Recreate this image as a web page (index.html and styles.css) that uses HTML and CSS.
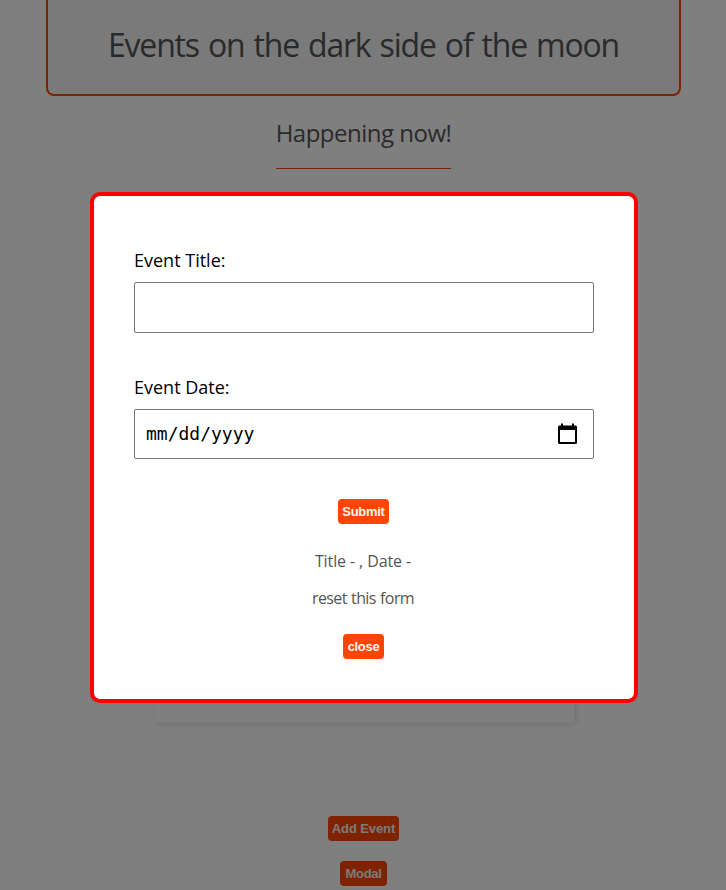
FILE: index.html
```
<!DOCTYPE html>
<html lang="en">
<head>
<meta charset="utf-8">
<title>Events on the dark side of the moon</title>
<link rel="stylesheet" href="styles.css">
</head>
<body>
<div class="page">
  <header class="banner"><h1 class="title"><span>Events on the dark side of the moon</span></h1></header>
  <h2 class="subtitle"><span>Happening now!</span></h2>
  <div class="card"></div>
  <button class="btn btn-add">Add Event</button>
  <button class="btn btn-open">Modal</button>
</div>
<div class="backdrop">
  <div class="modal">
    <form class="form">
      <label class="field"><span class="label label-title">Event Title:</span><span class="input"></span></label>
      <label class="field"><span class="label label-date">Event Date:</span>
        <span class="input"><span class="date">mm/dd/yyyy</span>
          <svg class="calendar" width="19" height="22" viewBox="0 0 19 22"><path d="M3 .5h2v2h9v-2h2v2h1.500a1.500 1.500 0 0 1 1.500 1.500v15.500a1.500 1.500 0 0 1-1.500 1.500h-16a1.500 1.500 0 0 1-1.500-1.500V4a1.500 1.500 0 0 1 1.500-1.500H3zM2 7v12h15V7z" fill="#000" fill-rule="evenodd"/></svg>
        </span>
      </label>
      <button type="button" class="btn btn-submit">Submit</button>
      <p class="note note-values"><span>Title - , Date -</span></p>
      <p class="note note-reset"><span>reset this form</span></p>
    </form>
    <button class="btn btn-close">close</button>
  </div>
</div>
</body>
</html>
```
FILE: styles.css
```
* { box-sizing: border-box; }
html, body { margin: 0; height: 100%; overflow: hidden; }
body {
  font-family: "Open Sans", "Noto Sans", sans-serif;
  font-size: 16px;
  color: #555;
  background: #fff;
}
h1, h2, p { margin: 0; font-weight: 400; white-space: nowrap; }
.page { display: flex; flex-direction: column; align-items: center; height: 890px; padding-left: 1px; }
.banner {
  width: 635px;
  height: 96px;
  padding-top: 22px;
  border: 2px solid #ff4500;
  border-top: 0;
  border-radius: 0 0 8px 8px;
  background: #f4f4f4;
  text-align: center;
}
.title { font-size: 32px; line-height: 46px; letter-spacing: -1.2px; word-spacing: 2px; }
.subtitle {
  height: 73px;
  padding-top: 19px;
  border-bottom: 1px solid #ff4500;
  font-size: 24px;
  line-height: 35px;
  letter-spacing: -0.5px;
}
.card {
  width: 422px;
  height: 523px;
  margin: 31px 0 93px;
  border: 1px solid #f4f4f4;
  border-radius: 4px;
  box-shadow: 3px 3px 5px rgba(0, 0, 0, 0.08);
}
.btn {
  display: flex;
  align-items: center;
  justify-content: center;
  height: 25px;
  padding: 0;
  border: 0;
  border-radius: 4px;
  background: #ff4500;
  color: #f4f4f4;
  font: bold 13px/15px "Liberation Sans", Arial, sans-serif;
  letter-spacing: -0.3px;
}
.btn-add { width: 71px; margin-bottom: 20px; letter-spacing: -0.1px; }
.btn-open { width: 47px; }
.backdrop { position: fixed; inset: 0; background: rgba(0, 0, 0, 0.5); }
.modal {
  width: 548px;
  height: 511px;
  margin: 192px 0 0 90px;
  padding: 49px 40px 0;
  border: 4px solid #f00;
  border-radius: 10px;
  background: #fff;
}
.form, .modal { display: flex; flex-direction: column; align-items: center; }
.form { width: 100%; }
.field { display: block; width: 460px; }
.label { display: block; height: 37px; line-height: 31px; font-size: 18px; color: #000; letter-spacing: 0; }
.input {
  display: flex;
  align-items: center;
  justify-content: space-between;
  height: 51px;
  margin-bottom: 39px;
  padding: 0 16px 0 11px;
  border: 1px solid #767676;
  border-radius: 2px;
}
.field + .field .input { height: 50px; margin-bottom: 40px; }
.date { font: 18px/24px "DejaVu Sans Mono", monospace; color: #000; }
.btn-submit { width: 51px; margin-right: 1px; }
.note { line-height: 22px; margin-right: 2px; }
.note-values { margin-top: 26px; letter-spacing: -0.1px; }
.note-reset { margin-top: 15px; letter-spacing: -0.6px; word-spacing: 0.7px; }
.btn-close { width: 41px; margin-top: 25px; margin-right: 1px; }
```
